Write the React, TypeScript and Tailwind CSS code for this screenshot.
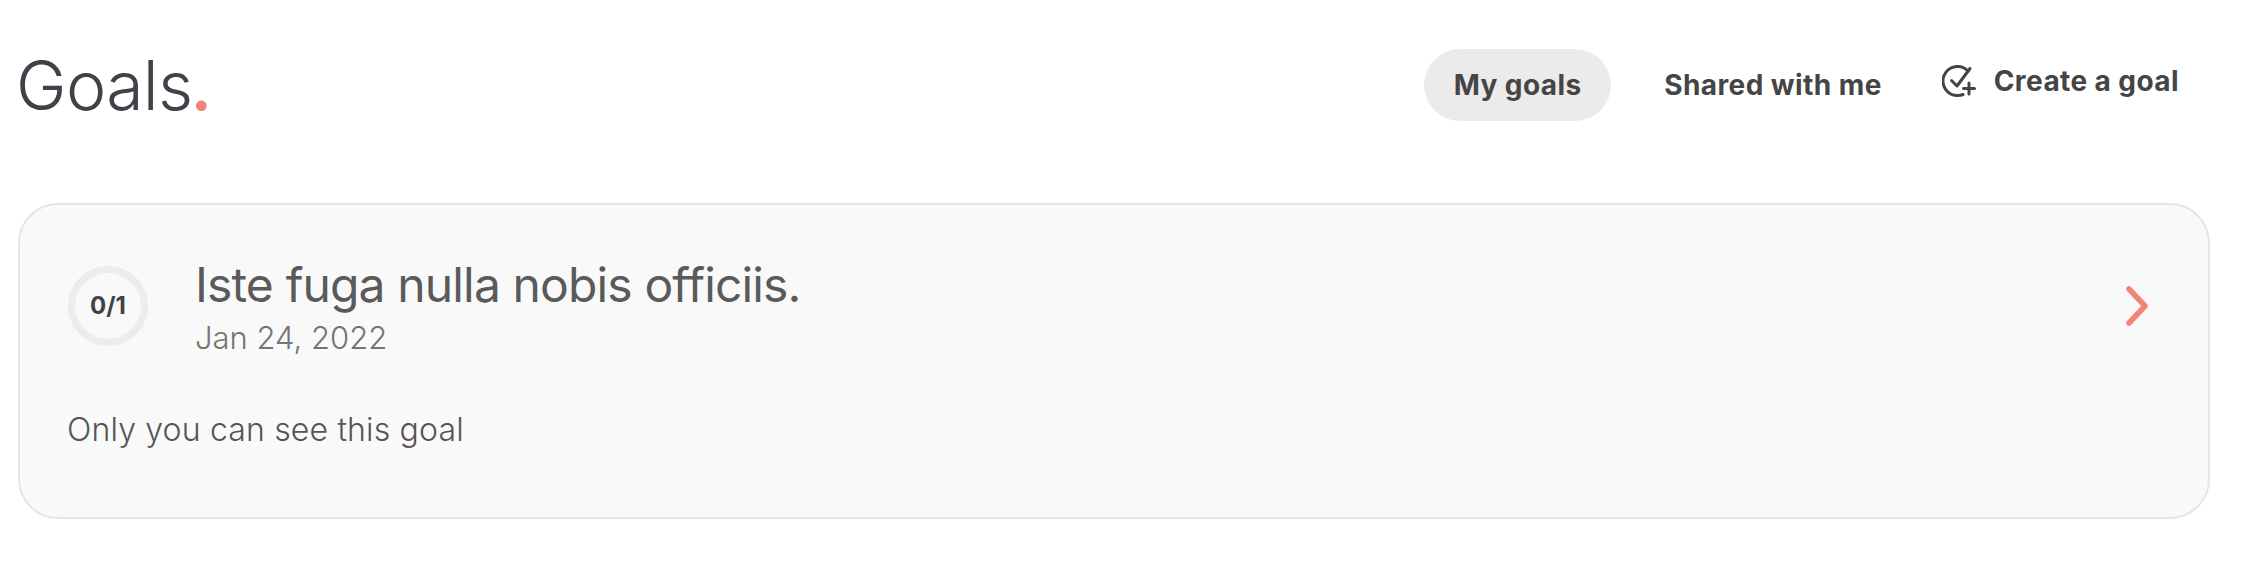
const FONT = "font-['Inter','Noto_Sans',sans-serif]";

const CreateGoalIcon = () => (
  <svg viewBox="0 0 34 32" className="w-[34px] h-[32px]" fill="none" stroke="#454545" strokeWidth="3" strokeLinecap="round" strokeLinejoin="round">
    <path d="M26 6A14.5 14.5 0 1 0 16 30.5a14.4 14.4 0 0 0 5-1" />
    <path d="M9.5 15.5l5.5 5.5L28 3.5" />
    <path d="M27 18v11M21.5 23.5h11" />
  </svg>
);

const App = () => {
  return (
    <div className={`${FONT} w-[2254px] h-[562px] bg-white pl-[18px] pr-[44px] pt-[49px] overflow-hidden`}>
      <header className="flex items-center justify-between h-[72px]">
        <h1 className="-ml-[2px] text-[68px] leading-none font-[350] tracking-[-0.01em] text-[#3f4249]">
          Goals<span className="-ml-[2px] text-[#f28476] font-semibold">.</span>
        </h1>
        <nav className="flex items-center text-[28px] tracking-[0.015em] font-bold text-[#454545] mr-[31px]">
          <button className="h-[72px] w-[187px] rounded-full bg-[#ebebeb]">My goals</button>
          <button className="ml-[53px]">Shared with me</button>
          <button className="ml-[60px] flex items-center gap-[18px] -translate-y-[4px]">
            <CreateGoalIcon />
            Create a goal
          </button>
        </nav>
      </header>

      <section className="mt-[82px] h-[316px] rounded-[40px] border-2 border-[#e5e5e5] bg-[#f9f9f9] pl-[48px] pr-[58px] pt-[50px]">
        <div className="flex items-center justify-between">
          <div className="flex items-center">
            <div className="w-[80px] h-[80px] rounded-full border-[7px] border-[#ececec] flex items-center justify-center text-[24px] font-bold text-[#3f4249]">
              0/1
            </div>
            <div className="ml-[47px] mt-[3px]">
              <h2 className="text-[48px] leading-[54px] font-normal tracking-[-0.018em] text-[#5a5a5a]">Iste fuga nulla nobis officiis.</h2>
              <p className="mt-[7px] text-[31px] leading-[38px] font-light text-[#757575]">Jan 24, 2022</p>
            </div>
          </div>
          <svg viewBox="0 0 24 40" className="w-[24px] h-[40px]" fill="none" stroke="#f28476" strokeWidth="5.5" strokeLinecap="round" strokeLinejoin="round">
            <path d="M3 3l16 17L3 37" />
          </svg>
        </div>
        <p className="-ml-[1px] mt-[53px] text-[32px] leading-[40px] font-[350] tracking-[0.005em] text-[#555555]">Only you can see this goal</p>
      </section>
    </div>
  );
};

export default App;
